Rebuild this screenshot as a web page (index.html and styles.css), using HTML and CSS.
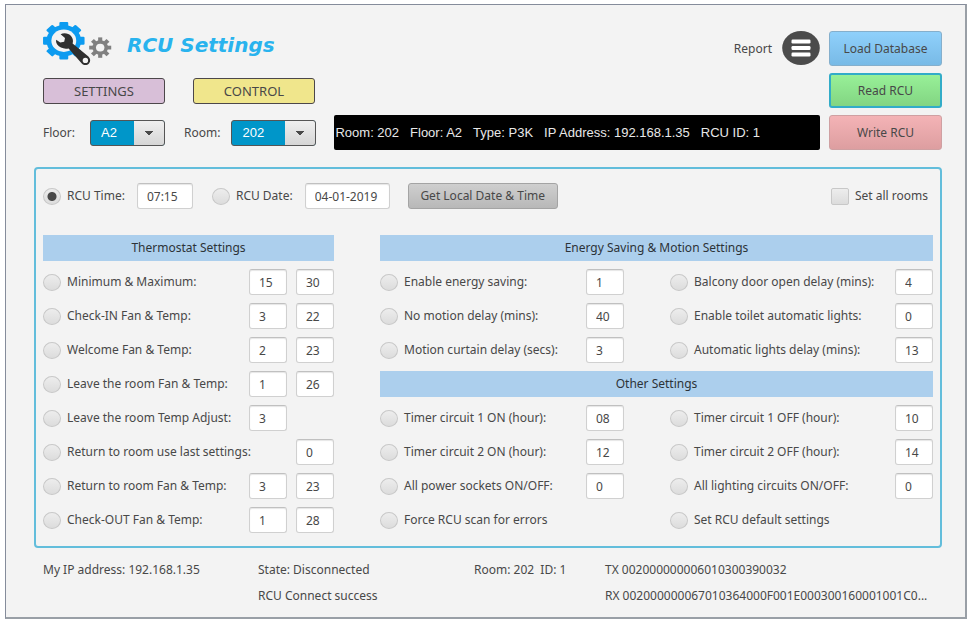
FILE: index.html
```html
<!DOCTYPE html>
<html lang="en">
<head>
<meta charset="utf-8">
<title>RCU Settings</title>
<link rel="stylesheet" href="styles.css">
</head>
<body>
<main class="window">
  <header class="top">
    <div class="brand-row">
      <svg class="logo" viewBox="43 22 70 44" width="70" height="44" aria-hidden="true">
        <g transform="translate(63.8 40.7) scale(1.11 1)">
          <g fill="#0c9bf0">
            <circle r="15.6"/>
            <rect x="-4" y="-18.7" width="8" height="37.4" rx="1"/>
            <rect x="-4" y="-18.7" width="8" height="37.4" rx="1" transform="rotate(45)"/>
            <rect x="-4" y="-18.7" width="8" height="37.4" rx="1" transform="rotate(90)"/>
            <rect x="-4" y="-18.7" width="8" height="37.4" rx="1" transform="rotate(135)"/>
          </g>
          <circle r="11.2" fill="#f3f3f3"/>
        </g>
        <path d="M60.6 34.2 C64 32.6 68.6 33.2 71.2 36.2 C73 38.4 73.4 41 72.6 43.6 L88.4 56.6 C90.6 58.6 90.8 61.6 89 63.6 C87 65.6 83.8 65.6 81.8 63.6 L68.6 48.4 C64.4 49.4 59.6 48 57.2 44.6 C56.2 43 55.8 41.4 56.2 39.8 L60.2 42.6 L64.2 41.8 L65 38 Z" fill="#2f2f2f"/>
        <circle cx="85.4" cy="60.4" r="2.7" fill="#f3f3f3"/>
        <g transform="translate(100.2 47.6) scale(1.08 1)">
          <g fill="#808080">
            <circle r="7.3"/>
            <rect x="-1.9" y="-10.2" width="3.8" height="20.4"/>
            <rect x="-1.9" y="-10.2" width="3.8" height="20.4" transform="rotate(45)"/>
            <rect x="-1.9" y="-10.2" width="3.8" height="20.4" transform="rotate(90)"/>
            <rect x="-1.9" y="-10.2" width="3.8" height="20.4" transform="rotate(135)"/>
          </g>
          <circle r="3.9" fill="#f3f3f3"/>
        </g>
      </svg>
      <h1 class="title">RCU Settings</h1>
      <button class="report" type="button">Report
        <svg viewBox="0 0 38 35" width="38" height="35" aria-hidden="true">
          <ellipse cx="19" cy="17" rx="18.8" ry="17" fill="#4b4b4b"/>
          <g fill="#fff">
            <rect x="9.5" y="8.5" width="19" height="4" rx="1.2"/>
            <rect x="9.5" y="15" width="19" height="4" rx="1.2"/>
            <rect x="9.5" y="21.5" width="19" height="4" rx="1.2"/>
          </g>
        </svg>
      </button>
    </div>
    <button class="action load" type="button">Load Database</button>
    <nav class="tabs">
      <button class="tab tab-settings" type="button">SETTINGS</button>
      <button class="tab tab-control" type="button">CONTROL</button>
    </nav>
    <button class="action read" type="button">Read RCU</button>
    <div class="picker-row">
      <label for="floor">Floor:</label>
      <select id="floor" class="picker picker-floor"><option>A2</option></select>
      <label for="room">Room:</label>
      <select id="room" class="picker picker-room"><option>202</option></select>
      <div class="readout"><span>Room: 202</span><span>Floor: A2</span><span>Type: P3K</span><span>IP Address: 192.168.1.35</span><span>RCU ID: 1</span></div>
    </div>
    <button class="action write" type="button">Write RCU</button>
  </header>

  <form class="panel">
    <div class="clock-row">
      <label class="choice"><input type="radio" name="item" checked>RCU Time:</label>
      <input class="field field-time" type="text" value="07:15" aria-label="RCU time">
      <label class="choice choice-date"><input type="radio" name="item">RCU Date:</label>
      <input class="field field-date" type="text" value="04-01-2019" aria-label="RCU date">
      <button class="local" type="button">Get Local Date &amp; Time</button>
      <label class="choice choice-all"><input type="checkbox">Set all rooms</label>
    </div>

    <div class="sections">
      <section class="stack">
        <h2 class="heading">Thermostat Settings</h2>
        <div class="row"><label class="choice"><input type="radio" name="item">Minimum &amp; Maximum:</label><input class="field" type="text" value="15" aria-label="Minimum"><input class="field" type="text" value="30" aria-label="Maximum"></div>
        <div class="row"><label class="choice"><input type="radio" name="item">Check-IN Fan &amp; Temp:</label><input class="field" type="text" value="3" aria-label="Check-IN fan"><input class="field" type="text" value="22" aria-label="Check-IN temp"></div>
        <div class="row"><label class="choice"><input type="radio" name="item">Welcome Fan &amp; Temp:</label><input class="field" type="text" value="2" aria-label="Welcome fan"><input class="field" type="text" value="23" aria-label="Welcome temp"></div>
        <div class="row"><label class="choice"><input type="radio" name="item">Leave the room Fan &amp; Temp:</label><input class="field" type="text" value="1" aria-label="Leave the room fan"><input class="field" type="text" value="26" aria-label="Leave the room temp"></div>
        <div class="row row-first-only"><label class="choice"><input type="radio" name="item">Leave the room Temp Adjust:</label><input class="field" type="text" value="3" aria-label="Leave the room temp adjust"></div>
        <div class="row"><label class="choice"><input type="radio" name="item">Return to room use last settings:</label><input class="field" type="text" value="0" aria-label="Return to room use last settings"></div>
        <div class="row"><label class="choice"><input type="radio" name="item">Return to room Fan &amp; Temp:</label><input class="field" type="text" value="3" aria-label="Return to room fan"><input class="field" type="text" value="23" aria-label="Return to room temp"></div>
        <div class="row"><label class="choice"><input type="radio" name="item">Check-OUT Fan &amp; Temp:</label><input class="field" type="text" value="1" aria-label="Check-OUT fan"><input class="field" type="text" value="28" aria-label="Check-OUT temp"></div>
      </section>

      <section class="pairs">
        <h2 class="heading">Energy Saving &amp; Motion Settings</h2>
        <div class="row"><label class="choice"><input type="radio" name="item">Enable energy saving:</label><input class="field" type="text" value="1" aria-label="Enable energy saving"></div>
        <div class="row"><label class="choice"><input type="radio" name="item">Balcony door open delay (mins):</label><input class="field" type="text" value="4" aria-label="Balcony door open delay"></div>
        <div class="row"><label class="choice"><input type="radio" name="item">No motion delay (mins):</label><input class="field" type="text" value="40" aria-label="No motion delay"></div>
        <div class="row"><label class="choice"><input type="radio" name="item">Enable toilet automatic lights:</label><input class="field" type="text" value="0" aria-label="Enable toilet automatic lights"></div>
        <div class="row"><label class="choice"><input type="radio" name="item">Motion curtain delay (secs):</label><input class="field" type="text" value="3" aria-label="Motion curtain delay"></div>
        <div class="row"><label class="choice"><input type="radio" name="item">Automatic lights delay (mins):</label><input class="field" type="text" value="13" aria-label="Automatic lights delay"></div>
        <h2 class="heading">Other Settings</h2>
        <div class="row"><label class="choice"><input type="radio" name="item">Timer circuit 1 ON (hour):</label><input class="field" type="text" value="08" aria-label="Timer circuit 1 ON"></div>
        <div class="row"><label class="choice"><input type="radio" name="item">Timer circuit 1 OFF (hour):</label><input class="field" type="text" value="10" aria-label="Timer circuit 1 OFF"></div>
        <div class="row"><label class="choice"><input type="radio" name="item">Timer circuit 2 ON (hour):</label><input class="field" type="text" value="12" aria-label="Timer circuit 2 ON"></div>
        <div class="row"><label class="choice"><input type="radio" name="item">Timer circuit 2 OFF (hour):</label><input class="field" type="text" value="14" aria-label="Timer circuit 2 OFF"></div>
        <div class="row"><label class="choice"><input type="radio" name="item">All power sockets ON/OFF:</label><input class="field" type="text" value="0" aria-label="All power sockets"></div>
        <div class="row"><label class="choice"><input type="radio" name="item">All lighting circuits ON/OFF:</label><input class="field" type="text" value="0" aria-label="All lighting circuits"></div>
        <div class="row"><label class="choice"><input type="radio" name="item">Force RCU scan for errors</label></div>
        <div class="row"><label class="choice"><input type="radio" name="item">Set RCU default settings</label></div>
      </section>
    </div>
  </form>

  <footer class="status">
    <span>My IP address: 192.168.1.35</span>
    <span>State: Disconnected</span>
    <span>Room: 202&nbsp; ID: 1</span>
    <span>TX 002000000006010300390032</span>
    <span class="status-connect">RCU Connect success</span>
    <span class="status-rx">RX 002000000067010364000F001E000300160001001C0...</span>
  </footer>
</main>
</body>
</html>
```
FILE: styles.css
```css
* { box-sizing: border-box; }

body {
  margin: 0;
  padding: 4px 6px 9px 5px;
  background: #fff;
  color: #484848;
  font: 12px/18px "Noto Sans", "Open Sans", sans-serif;
}

button, input, select { font: inherit; color: inherit; margin: 0; }

.window {
  min-height: calc(100vh - 13px);
  padding: 26px 23px 0 28px;
  background: #f3f3f3;
  border: 1px solid #858c9b;
  border-right: 2px solid #999fa6;
  border-bottom: 2px solid #999fa6;
}

/* Header */
.top {
  display: grid;
  grid-template-columns: 1fr 113px;
  grid-auto-rows: 35px;
  gap: 7px 9px;
  padding-left: 9px;
}

.brand-row { display: flex; align-items: flex-end; }
.logo { flex: none; }
.title {
  align-self: flex-start;
  margin: 0 0 0 14px;
  color: #29b3ee;
  font: italic 700 20px/28px "DejaVu Sans", sans-serif;
}
.report {
  display: flex;
  align-items: center;
  gap: 10px;
  margin-left: auto;
  padding: 0;
  border: 0;
  background: none;
}

.action {
  border: 1px solid #b0b0b0;
  border-radius: 3px;
  padding: 0;
}
.load { background: linear-gradient(#8fd0fb, #78bae6); border-color: #85afcc; }
.read { background: linear-gradient(#98f098, #82d582); border: 2px solid #32acc8; }
.write { background: linear-gradient(#f4b3b6, #dd9ea0); border-color: #cfa0a2; }

.tabs { display: flex; align-items: center; gap: 28px; }
.tab {
  width: 122px;
  height: 26px;
  padding: 0;
  border: 1px solid #4c474a;
  border-radius: 3px;
  font-size: 13px;
}
.tab-settings { background: #d8bfd8; }
.tab-control { background: #f0e68c; }

.picker-row { display: flex; align-items: center; }
.picker {
  appearance: none;
  height: 26px;
  padding: 0 0 0 10px;
  border: 1px solid #555;
  border-radius: 3px;
  color: #fff;
  font: 13px/24px "Liberation Sans", sans-serif;
  background:
    linear-gradient(to bottom right, #4a4a4a 50%, transparent 50%) right 10px center / 5px 4px no-repeat,
    linear-gradient(to bottom left, #4a4a4a 50%, transparent 50%) right 15px center / 5px 4px no-repeat,
    linear-gradient(#efefef, #d6d6d6) right / 30px 100% no-repeat,
    #0096c9;
}
.picker-floor { width: 75px; margin: 0 19px 0 15px; }
.picker-room { width: 85px; margin: 0 18px 0 11px; }
.readout {
  display: flex;
  align-items: center;
  flex: 1;
  gap: 11px;
  height: 35px;
  padding-left: 1px;
  border-radius: 2px;
  background: #000;
  color: #e8e8e8;
  font: 13px/18px "Liberation Sans", sans-serif;
  white-space: nowrap;
}

/* Settings panel */
.panel {
  margin-top: 17px;
  padding: 14px 7px 13px;
  border: 2px solid #62bddb;
  border-radius: 4px;
}
.clock-row { display: flex; align-items: center; margin-bottom: 26px; }

.choice { display: flex; align-items: center; gap: 6px; white-space: nowrap; }
.choice input {
  appearance: none;
  flex: none;
  width: 18px;
  height: 17px;
  border: 1px solid #c8c8c8;
  border-radius: 50%;
  background: linear-gradient(#ededed, #dcdcdc);
}
.choice input[type="radio"]:checked {
  background: radial-gradient(circle, #4a4a4a 4px, transparent 5px), linear-gradient(#ededed, #dcdcdc);
}
.choice input[type="checkbox"] { border-radius: 2px; }
.choice-date { margin-left: 19px; }
.choice-all { margin: 0 5px 0 auto; }

.field {
  flex: none;
  width: 38px;
  height: 26px;
  padding: 0 0 0 9px;
  border: 1px solid #d0d0d0;
  border-top-color: #c0c0c0;
  border-radius: 3px;
  background: #fff;
  box-shadow: inset 0 1px 1px #e6e6e6;
}
.field-time { width: 56px; margin-left: 12px; }
.field-date { width: 85px; margin-left: 12px; }
.local {
  width: 150px;
  height: 26px;
  margin-left: 18px;
  padding: 0;
  border: 1px solid #a4a4a4;
  border-radius: 3px;
  background: linear-gradient(#cfcfcf, #b8b8b8);
}

.sections { display: grid; grid-template-columns: 291fr 553fr; gap: 46px; }
.stack { display: grid; grid-auto-rows: 26px; gap: 8px; }
.pairs {
  display: grid;
  grid-template-columns: 244fr 263fr;
  grid-auto-rows: 26px;
  gap: 8px 46px;
}
.heading {
  margin: 0;
  background: #accfed;
  color: #2c3338;
  font-size: 12px;
  line-height: 25px;
  font-weight: 400;
  text-align: center;
}
.pairs .heading { grid-column: 1 / -1; }
.row { display: flex; align-items: center; gap: 9px; min-width: 0; }
.row .choice { flex: 1; min-width: 0; }
.row-first-only { padding-right: 47px; }

/* Status lines */
.status {
  display: grid;
  grid-template-columns: 215fr 216fr 131fr 337fr;
  padding: 9px 0 8px 9px;
  line-height: 26px;
  white-space: nowrap;
}
.status-connect { grid-column: 2; }
.status-rx { grid-column: 4; }
```
